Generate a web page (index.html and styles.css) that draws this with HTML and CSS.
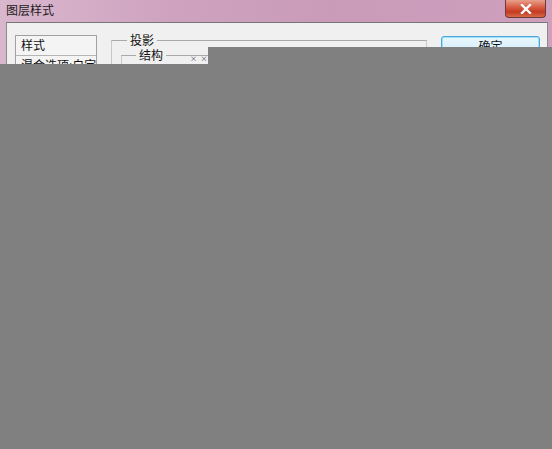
FILE: index.html
```html
<!DOCTYPE html>
<html>
<head>
<meta charset="utf-8">
<link rel="stylesheet" href="styles.css">
</head>
<body>
<div class="window">
  <div class="titlebar">
    <span class="title">图层样式</span>
    <div class="close">
      <svg width="12" height="10" viewBox="0 0 12 10"><path d="M2 1 L10 9 M10 1 L2 9" stroke="#fff" stroke-width="2.4" stroke-linecap="square"/></svg>
    </div>
  </div>
  <div class="client">
    <div class="stylelist">
      <div class="item">样式</div>
      <div class="item">混合选项:自定</div>
      <div class="item">投影</div>
    </div>
    <fieldset class="group">
      <legend>投影</legend>
      <fieldset class="inner">
        <legend>结构</legend>
        <span class="dots">× ×</span>
      </fieldset>
    </fieldset>
    <div class="buttons">
      <button class="btn default">确定</button>
    </div>
  </div>
  <div class="mask mask-right"></div>
  <div class="mask mask-bottom"></div>
</div>
</body>
</html>
```
FILE: styles.css
```css
html, body {
  margin: 0;
  padding: 0;
}
body {
  width: 552px;
  height: 449px;
  overflow: hidden;
  font-family: "Noto Sans CJK SC", "DejaVu Sans", sans-serif;
  font-size: 12px;
  color: #111;
}
.window {
  position: relative;
  width: 552px;
  height: 449px;
  background: linear-gradient(90deg, #d9b7cd 0%, #cfa3c0 30%, #c99bb9 60%, #cf9fbe 100%);
  display: flex;
  flex-direction: column;
  overflow: hidden;
}
.titlebar {
  height: 22px;
  display: flex;
  align-items: flex-start;
  justify-content: space-between;
  flex: none;
}
.title {
  margin: 1px 0 0 6px;
  line-height: 18px;
  font-size: 12px;
  color: #1b1b1b;
}
.close {
  width: 41px;
  height: 18px;
  margin-right: 6px;
  border: 1px solid #6d3a3a;
  border-top: none;
  border-radius: 0 0 4px 4px;
  background: linear-gradient(180deg, #e9a08c 0%, #d6593f 45%, #c23a22 70%, #d86a45 100%);
  display: flex;
  align-items: center;
  justify-content: center;
  box-sizing: border-box;
}
.client {
  flex: 1;
  margin: 0 4px 0 6px;
  background: #f0f0f0;
  border-top: 1px solid #777;
  border-left: 1px solid #8a8a8a;
  border-right: 1px solid #8a8a8a;
  display: flex;
  align-items: flex-start;
  padding: 12px 0 0 8px;
}
.stylelist {
  width: 82px;
  height: 300px;
  border: 1px solid #a0a0a0;
  background: #f4f4f4;
  box-sizing: border-box;
  flex: none;
}
.item {
  height: 20px;
  line-height: 18px;
  padding-left: 5px;
  border-bottom: 1px solid #b5b5b5;
  box-sizing: border-box;
  white-space: nowrap;
  overflow: hidden;
}
.group {
  margin: -2px 0 0 14px;
  width: 316px;
  height: 300px;
  box-sizing: border-box;
  border: 1px solid #c9c9c9;
  border-top-color: #a9a9a9;
  padding: 1px 0 0 9px;
  flex: none;
}
.group legend {
  padding: 0 3px;
  margin-left: 6px;
  line-height: 14px;
}
.inner {
  margin: 0;
  border: 1px solid #c9c9c9;
  border-top-color: #a9a9a9;
  height: 200px;
  padding: 0;
  position: relative;
}
.inner legend {
  padding: 0 3px;
  margin-left: 14px;
  line-height: 14px;
}
.dots {
  position: absolute;
  left: 68px;
  top: -9px;
  font-size: 7px;
  color: #444;
  letter-spacing: 1px;
}
.buttons {
  margin-left: 14px;
  flex: none;
}
.btn {
  width: 99px;
  height: 24px;
  margin-top: 1px;
  font-family: "Noto Sans CJK SC", sans-serif;
  font-size: 12px;
  color: #111;
  line-height: 14px;
  padding: 0 0 4px;
  border: 1px solid #4aa8d8;
  border-radius: 3px;
  background: linear-gradient(180deg, #eaf6fd 0%, #d9f0fc 50%, #bee6fd 51%, #a7d9f5 100%);
  box-shadow: inset 0 0 0 1px #9fe0fa;
}
.mask {
  position: absolute;
  background: #808080;
}
.mask-right {
  left: 208px;
  top: 47px;
  right: 0;
  bottom: 0;
}
.mask-bottom {
  left: 0;
  top: 64px;
  right: 0;
  bottom: 0;
}
```
